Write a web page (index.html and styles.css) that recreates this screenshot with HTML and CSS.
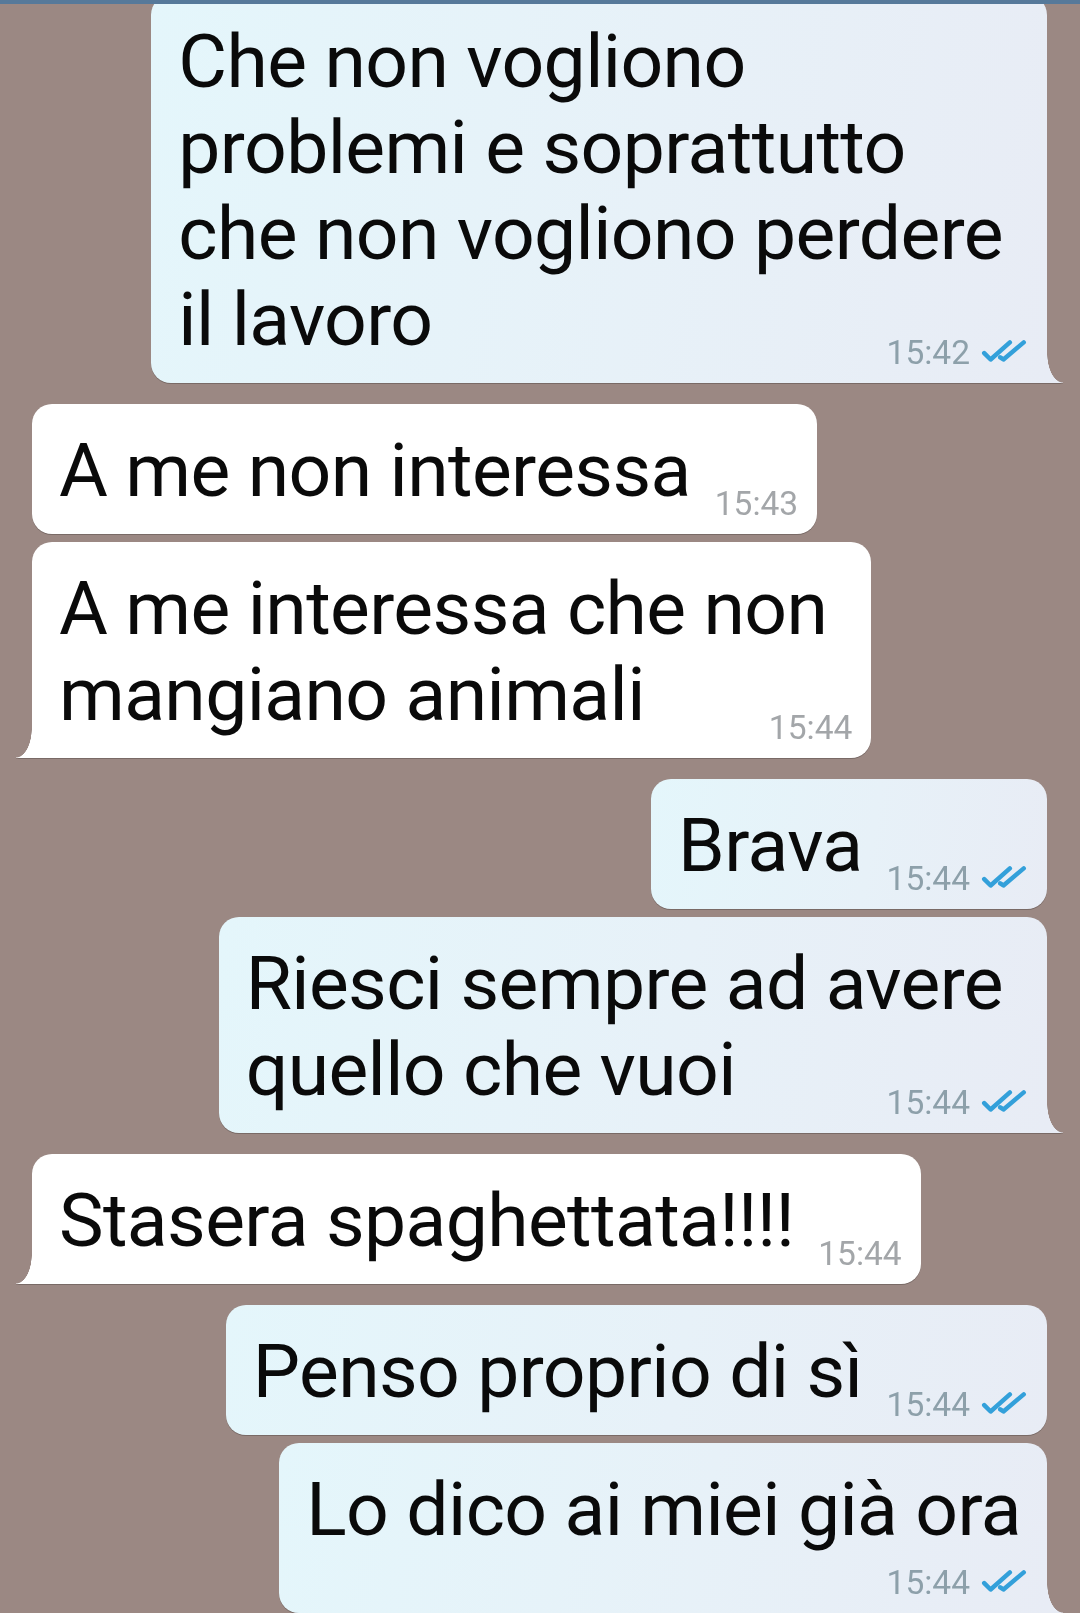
FILE: index.html
```html
<!DOCTYPE html>
<html lang="it">
<head>
<meta charset="utf-8">
<title>Chat</title>
<link rel="stylesheet" href="styles.css">
</head>
<body>
<div class="topbar"></div>
<main class="chat">
  <div class="msg out tail wide first">Che non vogliono<br>problemi e soprattutto<br>che non vogliono perdere<br>il lavoro<span class="meta"><span class="time">15:42</span><svg class="ticks" viewBox="0 0 44 22" width="47" height="24"><path d="M3 12 L9 18 L27 2"/><path d="M18 16 L21 18 L40 2"/></svg></span></div>

  <div class="msg in">A me non interessa<span class="meta"><span class="time">15:43</span></span></div>
  <div class="msg in tail wide cont">A me interessa che non<br>mangiano animali<span class="meta"><span class="time">15:44</span></span></div>

  <div class="msg out">Brava<span class="meta"><span class="time">15:44</span><svg class="ticks" viewBox="0 0 44 22" width="47" height="24"><path d="M3 12 L9 18 L27 2"/><path d="M18 16 L21 18 L40 2"/></svg></span></div>
  <div class="msg out tail wide cont">Riesci sempre ad avere<br>quello che vuoi<span class="meta"><span class="time">15:44</span><svg class="ticks" viewBox="0 0 44 22" width="47" height="24"><path d="M3 12 L9 18 L27 2"/><path d="M18 16 L21 18 L40 2"/></svg></span></div>

  <div class="msg in tail">Stasera spaghettata!!!!<span class="meta"><span class="time">15:44</span></span></div>

  <div class="msg out">Penso proprio di sì<span class="meta"><span class="time">15:44</span><svg class="ticks" viewBox="0 0 44 22" width="47" height="24"><path d="M3 12 L9 18 L27 2"/><path d="M18 16 L21 18 L40 2"/></svg></span></div>
  <div class="msg out tail below cont">Lo dico ai miei già ora<span class="meta"><span class="time">15:44</span><svg class="ticks" viewBox="0 0 44 22" width="47" height="24"><path d="M3 12 L9 18 L27 2"/><path d="M18 16 L21 18 L40 2"/></svg></span></div>
</main>
</body>
</html>
```

FILE: styles.css
```css
* { box-sizing: border-box; }

html, body {
  margin: 0;
  padding: 0;
}

body {
  width: 1080px;
  height: 1613px;
  overflow: hidden;
  background: #9b8883;
  font-family: Roboto, "Noto Sans", sans-serif;
}

.topbar {
  position: relative;
  z-index: 2;
  height: 4px;
  background: #56799a;
}

.chat {
  display: flex;
  flex-direction: column;
  padding: 0 33px 0 32px;
}

.msg {
  position: relative;
  margin-top: 21px;
  padding: 23px 19px 14px 27px;
  border-radius: 20px;
  font-size: 75px;
  line-height: 86px;
  letter-spacing: -0.6px;
  color: #0a0a0a;
  filter: drop-shadow(0 1px 0.6px rgba(0, 0, 0, 0.22));
}

.msg.first { margin-top: -9px; }
.msg.cont { margin-top: 8px; }

.in {
  align-self: flex-start;
  background: #ffffff;
}

.out {
  align-self: flex-end;
  background: linear-gradient(100deg, #e4f6fb 0%, #e7f1f8 55%, #e8ecf5 100%);
}

.in.tail { border-bottom-left-radius: 0; }
.out.tail { border-bottom-right-radius: 0; }

.tail::after {
  content: "";
  position: absolute;
  bottom: 0;
  width: 16px;
  height: 30px;
}

.in.tail::after {
  left: -16px;
  background: radial-gradient(16px 30px at 0 0, transparent 97%, #ffffff 100%);
}

.out.tail::after {
  right: -16px;
  background: radial-gradient(16px 30px at 100% 0, transparent 97%, #e8ecf5 100%);
}

.meta {
  float: right;
  margin: 61px 0 0 24px;
  font-size: 33.5px;
  line-height: 32px;
  letter-spacing: 0;
  white-space: nowrap;
}

.in .time { color: #a3a6a9; }
.out .time { color: #8da0aa; }

.ticks {
  margin-left: 11px;
  vertical-align: 0;
  fill: none;
  stroke: #33a0da;
  stroke-width: 4.2;
  stroke-linecap: round;
  stroke-linejoin: round;
}

.msg.wide { padding-right: 44px; }
.msg.wide .meta { margin-right: -25px; }

.msg.below { padding-right: 26px; }
.msg.below .meta {
  float: none;
  display: block;
  text-align: right;
  margin: 15px -7px 0 0;
}
```
